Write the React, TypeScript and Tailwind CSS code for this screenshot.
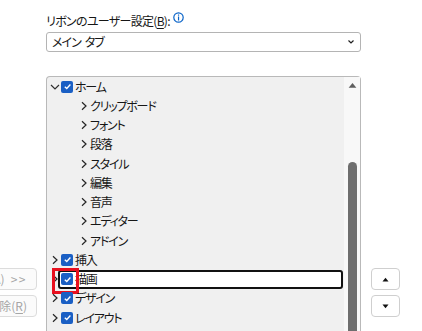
import React from "react";

const FONT = '"Noto Sans CJK JP", "Noto Sans", sans-serif';

function Chevron({ open }: { open?: boolean }) {
  if (open) {
    return (
      <svg width="10" height="10" viewBox="0 0 10 10">
        <path d="M1 3 L5 7 L9 3" fill="none" stroke="#303030" strokeWidth="1.2" />
      </svg>
    );
  }
  return (
    <svg width="8" height="10" viewBox="0 0 8 10">
      <path d="M2 1.3 L6 5 L2 8.7" fill="none" stroke="#262626" strokeWidth="1.2" />
    </svg>
  );
}

function Check() {
  return (
    <span className="flex h-[12px] w-[12px] items-center justify-center rounded-[2px] bg-[#1a5fc4]">
      <svg width="9" height="9" viewBox="0 0 10 10">
        <path d="M2 5.2 L4.2 7.3 L8.2 2.8" fill="none" stroke="white" strokeWidth="1.5" />
      </svg>
    </span>
  );
}

type Row = { label: string; level: 0 | 1; open?: boolean; selected?: boolean };

const rows: Row[] = [
  { label: "ホーム", level: 0, open: true },
  { label: "クリップボード", level: 1 },
  { label: "フォント", level: 1 },
  { label: "段落", level: 1 },
  { label: "スタイル", level: 1 },
  { label: "編集", level: 1 },
  { label: "音声", level: 1 },
  { label: "エディター", level: 1 },
  { label: "アドイン", level: 1 },
  { label: "挿入", level: 0 },
  { label: "描画", level: 0, selected: true },
  { label: "デザイン", level: 0 },
  { label: "レイアウト", level: 0 },
];

export default function App() {
  return (
    <div
      className="relative h-[331px] w-[422px] overflow-hidden bg-white text-[12px] text-[#161616]"
      style={{ fontFamily: FONT, fontFeatureSettings: '"palt"' }}
    >
      <div className="flex flex-col pl-[46px] pt-[12px]">
        <div className="flex h-[17px] items-center">
          <span className="leading-none tracking-[-0.7px]">
            リボンのユーザー設定(<span className="underline underline-offset-2">B</span>):
          </span>
          <svg className="ml-[3px] -mt-[6px]" width="11" height="11" viewBox="0 0 11 11">
            <circle cx="5.5" cy="5.5" r="4.7" fill="none" stroke="#0a64c8" strokeWidth="1.2" />
            <rect x="4.95" y="4.5" width="1.2" height="4" fill="#0a64c8" />
            <rect x="4.95" y="2.5" width="1.2" height="1.2" fill="#0a64c8" />
          </svg>
        </div>
        <div className="mt-[3px] flex h-[20px] w-[315px] items-center justify-between rounded-[3px] border border-[#b4b4b4] pl-[5px] pr-[5px]">
          <span className="flex items-center gap-[4px] leading-none tracking-[-1px]">
            <span>メイン</span>
            <span>タブ</span>
          </span>
          <svg width="8" height="6" viewBox="0 0 8 6">
            <path d="M1.5 1.5 L4 4 L6.5 1.5" fill="none" stroke="#202020" strokeWidth="1.2" />
          </svg>
        </div>
      </div>

      <div className="mt-[24px] flex">
        {/* left buttons column */}
        <div className="flex w-[46px] flex-col pt-[192px]">
          <div className="ml-[-44px] flex h-[22px] w-[81px] items-center justify-end rounded-[4px] border border-[#dcdcdc] bg-[#fbfbfb] pr-[9px] text-[#a6a6a6]">
            追加(A)<span className="ml-[6px] tracking-[1.5px]">&gt;&gt;</span>
          </div>
          <div className="ml-[-44px] mt-[5px] flex h-[22px] w-[81px] items-center justify-end rounded-[4px] border border-[#dcdcdc] bg-[#fbfbfb] pr-[9px] text-[#a6a6a6]">
            削除(<span className="underline underline-offset-2">R</span>)
          </div>
        </div>

        {/* tree */}
        <div className="flex h-[280px] w-[315px] rounded-t-[4px] border border-b-0 border-[#b9b9b9] bg-[#f0f0f0]">
          <div className="flex w-[297px] flex-col">
            {rows.map((r, i) => (
              <div key={i} className="relative flex h-[19.25px] shrink-0 items-center">
                {r.selected && (
                  <div className="absolute bottom-[0px] left-[11px] right-[1px] top-[0px] rounded-[3px] border-2 border-[#111] bg-white" />
                )}
                {r.level === 0 ? (
                  <div className="relative flex items-center pl-[1px]">
                    <span className="flex w-[13px] items-center justify-center">
                      <Chevron open={r.open} />
                    </span>
                    <Check />
                    <span className="ml-[2px] leading-none tracking-[-1.2px]">{r.label}</span>
                  </div>
                ) : (
                  <div className="relative flex items-center pl-[32px]">
                    <span className="flex w-[10px] items-center justify-center">
                      <Chevron />
                    </span>
                    <span className="ml-[1px] leading-none tracking-[-1.2px]">{r.label}</span>
                  </div>
                )}
                {r.selected && (
                  <div className="absolute left-[5px] top-[-2px] h-[26px] w-[27px] border-[3px] border-[#e8101e]" />
                )}
              </div>
            ))}
          </div>
          <div className="flex w-[16px] flex-col items-center bg-[#f8f8f8] pt-[5px]">
            <svg width="9" height="7" viewBox="0 0 9 7">
              <path d="M0.5 6 L4.5 1 L8.5 6 Z" fill="#5f5f5f" />
            </svg>
            <div className="mt-[73px] h-[200px] w-[9px] rounded-full bg-[#6e6e6e]" />
          </div>
        </div>

        {/* right buttons */}
        <div className="flex flex-col pl-[10px] pt-[192px]">
          <div className="flex h-[22px] w-[29px] items-center justify-center rounded-[4px] border border-[#cfcfcf] bg-white">
            <svg width="7" height="5" viewBox="0 0 7 5">
              <path d="M0.5 4.5 L3.5 0.8 L6.5 4.5 Z" fill="#111" />
            </svg>
          </div>
          <div className="mt-[5px] flex h-[22px] w-[29px] items-center justify-center rounded-[4px] border border-[#cfcfcf] bg-white">
            <svg width="7" height="5" viewBox="0 0 7 5">
              <path d="M0.5 0.5 L3.5 4.2 L6.5 0.5 Z" fill="#111" />
            </svg>
          </div>
        </div>
      </div>
    </div>
  );
}
